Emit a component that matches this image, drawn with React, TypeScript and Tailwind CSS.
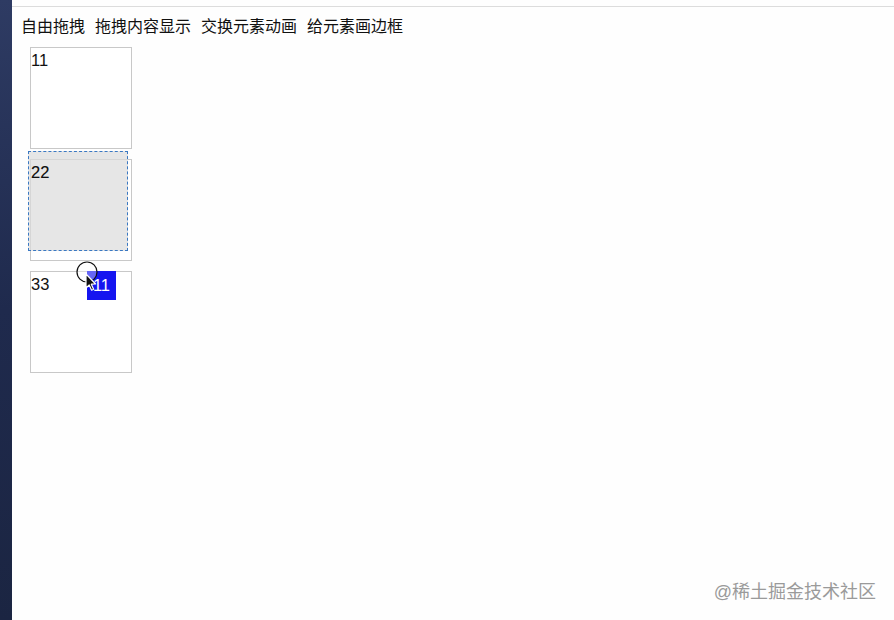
import React from 'react'

const font = { fontFamily: '"Liberation Sans", "Noto Sans CJK SC", Arial, sans-serif' }

// ドラッグ中のカーソル
function DragCursor() {
  return (
    <svg className="absolute left-[75px] top-[261px]" width="26" height="30" viewBox="0 0 26 30">
      <circle cx="12" cy="11" r="10" fill="rgba(255,255,255,0.35)" stroke="#111" strokeWidth="1.2" />
      <path d="M11 13 L11 27 L14.2 24 L16.6 29.2 L18.6 28.3 L16.3 23.2 L20.6 23 Z" fill="#111" stroke="#fff" strokeWidth="1.2" strokeLinejoin="round" />
    </svg>
  )
}

export default function App() {
  const items = ['11', '22', '33']
  return (
    <div className="flex h-[620px] w-[894px] overflow-hidden bg-[#fefefe]" style={font}>
      <div className="w-[12px] shrink-0 bg-gradient-to-b from-[#2e3b63] via-[#1f2a4d] to-[#1b2542]" />
      <div className="relative flex-1 pt-[6px]">
        <div className="border-t border-[#dcdcdc] pl-[9px] pt-[10px]">
          <div className="flex gap-[10px] text-[16px] leading-[20px] text-[#111]">
            <span>自由拖拽</span>
            <span>拖拽内容显示</span>
            <span>交换元素动画</span>
            <span>给元素画边框</span>
          </div>
          <div className="ml-[9px] mt-[10px] flex flex-col gap-[10px]">
            {items.map((n) => (
              <div key={n} className="relative h-[102px] w-[102px] border border-[#c8c8c8] bg-white">
                <span className="block text-[16.5px] leading-[24px] text-[#111]">{n}</span>
              </div>
            ))}
          </div>
        </div>

        {/* ドラッグ中のゴースト */}
        <div className="absolute left-[16px] top-[151px] h-[100px] w-[100px] border border-dashed border-[#3a78c2] bg-[#dcdcdc]/70">
          <span className="ml-[2px] mt-[8px] block text-[16.5px] leading-[24px] text-[#111]">22</span>
        </div>

        {/* ドラッグ中の要素 */}
        <div className="absolute left-[75px] top-[271px] flex h-[29px] w-[29px] items-center justify-center bg-[#1515f0] text-[16.5px] text-white">
          11
        </div>
        <div className="absolute left-[-12px] top-0">
          <DragCursor />
        </div>

        <div className="absolute right-[18px] top-[580px] text-[18px] leading-[24px] text-[#9a9a9a]">
          @稀土掘金技术社区
        </div>
      </div>
    </div>
  )
}
